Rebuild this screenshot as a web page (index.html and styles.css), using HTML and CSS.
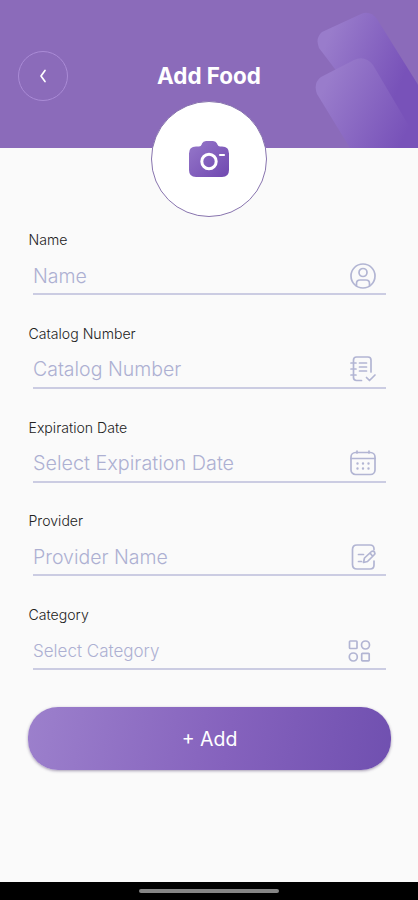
FILE: index.html
```html
<!DOCTYPE html>
<html lang="en">
<head>
<meta charset="utf-8">
<title>Add Food</title>
<link rel="stylesheet" href="styles.css">
</head>
<body>
<main class="screen">
  <header class="header">
    <svg class="header-art" viewBox="0 0 110 148" aria-hidden="true">
      <defs>
        <linearGradient id="bar-back" gradientUnits="userSpaceOnUse" x1="10" y1="45" x2="88" y2="78">
          <stop offset="0" stop-color="#997ccb"/>
          <stop offset="1" stop-color="#7852b9"/>
        </linearGradient>
        <linearGradient id="bar-front" gradientUnits="userSpaceOnUse" x1="8" y1="90" x2="92" y2="132">
          <stop offset="0" stop-color="#997ccb"/>
          <stop offset="1" stop-color="#7852b9"/>
        </linearGradient>
      </defs>
      <path fill="url(#bar-back)" d="M7 32 46 14Q55 10 62 19L120 112V148H80L4 48Q0 38 7 32Z"/>
      <path fill="url(#bar-front)" d="M6 77 39 60Q50 55 58 65L107 148H35L2 94Q-2 83 6 77Z"/>
    </svg>
    <button class="back" aria-label="Back">
      <svg width="10" height="16" viewBox="0 0 10 16"><path d="M7 2.500 3 8l4 5.500" fill="none" stroke="#fff" stroke-width="1.700" stroke-linecap="round" stroke-linejoin="round"/></svg>
    </button>
    <h1 class="title">Add Food</h1>
  </header>

  <button class="photo" aria-label="Add photo">
    <svg width="42" height="38" viewBox="0 0 42 38">
      <defs>
        <linearGradient id="cam" x1="0" y1="0" x2="1" y2="1">
          <stop offset="0" stop-color="#9678ca"/>
          <stop offset="1" stop-color="#7048b0"/>
        </linearGradient>
      </defs>
      <path fill="url(#cam)" d="M8 6.500h3q2 0 2.700-2L14 3.500Q15 1 18 1h7q3 0 4 2.500l.4 1q.8 2 2.700 2H34q7 0 7 7V30q0 7-7 7H8q-7 0-7-7V13.500q0-7 7-7Z"/>
      <circle cx="21" cy="21.500" r="7.200" fill="none" stroke="#fff" stroke-width="3"/>
      <path d="M32 15h4" stroke="#fff" stroke-width="2.200" stroke-linecap="round"/>
    </svg>
  </button>

  <form class="form">
    <div class="field">
      <div class="label">Name</div>
      <div class="control"><span class="value">Name</span>
        <svg class="icon" viewBox="0 0 28 28"><circle cx="14" cy="14" r="12"/><circle cx="14" cy="10.500" r="4"/><path d="M7.500 23.500v-2q0-3.500 3.500-3.500h6q3.500 0 3.500 3.500v2"/></svg>
      </div>
    </div>
    <div class="field">
      <div class="label">Catalog Number</div>
      <div class="control"><span class="value">Catalog Number</span>
        <svg class="icon" viewBox="0 0 28 28"><path d="M12.500 25.500H7.500q-3 0-3-3V5q0-3 3-3H19q3 0 3 3v12M2 8h5M2 14h5M2 20h5M10.500 8h7M10.500 12h7M10.500 16h7M17.500 22.500l3 3 5.500-5.500"/></svg>
      </div>
    </div>
    <div class="field">
      <div class="label">Expiration Date</div>
      <div class="control"><span class="value date">Select Expiration Date</span>
        <svg class="icon" viewBox="0 0 28 28"><rect x="2" y="3.500" width="24" height="22" rx="4.500"/><path d="M2 9.500h24M8 2v2M20 2v2"/><path class="dots" d="M8.500 14.500h.01M14 14.500h.01M19.500 14.500h.01M8.500 19.500h.01M14 19.500h.01M19.500 19.500h.01"/></svg>
      </div>
    </div>
    <div class="field">
      <div class="label">Provider</div>
      <div class="control"><span class="value">Provider Name</span>
        <svg class="icon" viewBox="0 0 28 28"><path d="M25 6.500V6q0-4-4-4H8Q3.500 2 3.500 6.500v15Q3.500 26 8 26h13q4 0 4-4v-4M9.500 11.500h5M9.500 18.500h3M14.500 19.500l1-4.500 7-6.500q2-1 3 .5t-.5 3L18.500 18.500ZM21 10l2.500 3"/></svg>
      </div>
    </div>
    <div class="field">
      <div class="label">Category</div>
      <div class="control category"><span class="value">Select Category</span>
        <svg class="icon" viewBox="0 0 28 28"><rect x="4.500" y="4" width="7.500" height="7.500" rx=".8"/><circle cx="20.500" cy="8" r="4"/><circle cx="8.300" cy="20" r="4"/><rect x="16.700" y="16.300" width="7.500" height="7.500" rx=".8"/></svg>
      </div>
    </div>
    <button class="add" type="button">+ Add</button>
  </form>

  <footer class="navbar"><span class="handle"></span></footer>
</main>
</body>
</html>
```
FILE: styles.css
```css
* { box-sizing: border-box; }
body { margin: 0; font-family: Inter, "Liberation Sans", sans-serif; }
button { border: 0; padding: 0; font-family: inherit; }
.screen {
  width: 418px;
  height: 900px;
  display: flex;
  flex-direction: column;
  background: #fafafa;
  overflow: hidden;
}
.header {
  position: relative;
  flex: none;
  height: 148px;
  padding: 51px 18px 0;
  display: grid;
  grid-template-columns: 50px 1fr 50px;
  align-items: start;
  background: #8b6bba;
}
.header-art { position: absolute; right: -7px; top: 0; width: 110px; height: 148px; }
.back {
  width: 50px;
  height: 50px;
  border: 1px solid #aa8bd6;
  border-radius: 50%;
  background: transparent;
  display: grid;
  place-items: center;
}
.title {
  position: relative;
  margin: 0;
  font-size: 22.400px;
  line-height: 50px;
  font-weight: 700;
  text-align: center;
  color: #fff;
}
.photo {
  position: relative;
  flex: none;
  align-self: center;
  width: 116px;
  height: 116px;
  margin-top: -47px;
  border: 1px solid #8874ae;
  border-radius: 50%;
  background: #fff;
  display: grid;
  place-items: center;
}
.form { flex: 1; padding: 14px 27px 0 28px; }
.field { height: 93.75px; }
.label { font-size: 14.100px; line-height: 18px; font-weight: 300; color: #222; padding-left: .5px; }
.control {
  height: 46px;
  margin: 0 5px 0 5px;
  padding: 9px 9px 0 0;
  border-bottom: 2px solid #cbcce2;
  display: flex;
  align-items: center;
  justify-content: space-between;
}
.value { font-size: 19.500px; font-weight: 300; line-height: 24px; color: #adb0d2; }
.date { font-size: 19.800px; }
.icon {
  width: 28px;
  height: 28px;
  fill: none;
  stroke: #b2b5d3;
  stroke-width: 1.700;
  stroke-linecap: round;
  stroke-linejoin: round;
}
.dots { stroke-width: 2.400; }
.category { padding-right: 13px; }
.category .value { font-size: 17px; }
.add {
  display: block;
  width: 363px;
  height: 63px;
  padding-top: 2px;
  margin-top: 7px;
  border-radius: 30px;
  background: linear-gradient(100deg, #9c80cc, #8562bd 55%, #7050b0);
  box-shadow: 0 1px 3px rgba(60, 40, 90, .45);
  color: #fff;
  font-size: 19.500px;
  font-weight: 400;
}
.navbar {
  flex: none;
  height: 18px;
  background: #000;
  display: grid;
  place-items: center;
}
.handle { width: 140px; height: 4px; border-radius: 2px; background: #858585; }
```
